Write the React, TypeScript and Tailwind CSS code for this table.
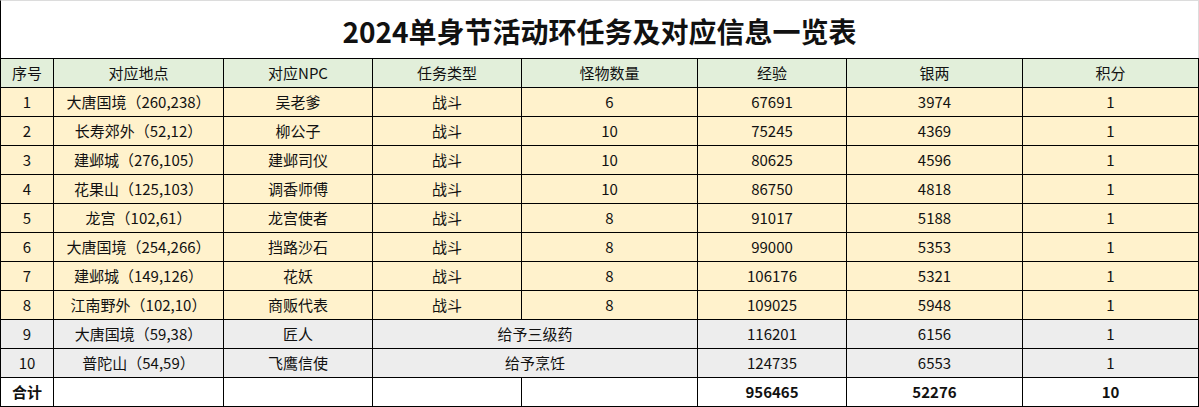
import React from "react";

type Row = {
  no: string;
  loc: string;
  npc: string;
  type: string;
  count?: string;
  exp: string;
  silver: string;
  pts: string;
  merged?: boolean;
};

const rows: Row[] = [
  { no: "1", loc: "大唐国境（260,238）", npc: "吴老爹", type: "战斗", count: "6", exp: "67691", silver: "3974", pts: "1" },
  { no: "2", loc: "长寿郊外（52,12）", npc: "柳公子", type: "战斗", count: "10", exp: "75245", silver: "4369", pts: "1" },
  { no: "3", loc: "建邺城（276,105）", npc: "建邺司仪", type: "战斗", count: "10", exp: "80625", silver: "4596", pts: "1" },
  { no: "4", loc: "花果山（125,103）", npc: "调香师傅", type: "战斗", count: "10", exp: "86750", silver: "4818", pts: "1" },
  { no: "5", loc: "龙宫（102,61）", npc: "龙宫使者", type: "战斗", count: "8", exp: "91017", silver: "5188", pts: "1" },
  { no: "6", loc: "大唐国境（254,266）", npc: "挡路沙石", type: "战斗", count: "8", exp: "99000", silver: "5353", pts: "1" },
  { no: "7", loc: "建邺城（149,126）", npc: "花妖", type: "战斗", count: "8", exp: "106176", silver: "5321", pts: "1" },
  { no: "8", loc: "江南野外（102,10）", npc: "商贩代表", type: "战斗", count: "8", exp: "109025", silver: "5948", pts: "1" },
  { no: "9", loc: "大唐国境（59,38）", npc: "匠人", type: "给予三级药", exp: "116201", silver: "6156", pts: "1", merged: true },
  { no: "10", loc: "普陀山（54,59）", npc: "飞鹰信使", type: "给予烹饪", exp: "124735", silver: "6553", pts: "1", merged: true },
];

const headers = ["序号", "对应地点", "对应NPC", "任务类型", "怪物数量", "经验", "银两", "积分"];

function Cell({ children, bg, span, bold }: { children?: React.ReactNode; bg: string; span?: boolean; bold?: boolean }) {
  return (
    <div
      className={`${bg} ${span ? "col-span-2" : ""} ${bold ? "font-bold" : ""} flex items-center justify-center whitespace-nowrap pt-px text-[15px] text-[#111]`}
    >
      {children}
    </div>
  );
}

export default function App() {
  return (
    <div className="w-[1199px] bg-white" style={{ fontFamily: '"Noto Sans CJK SC", "Noto Sans", sans-serif' }}>
      <div className="flex h-[58px] items-center justify-center border-l border-t border-r border-l-black border-t-[#dcdcdc] border-r-[#dcdcdc] pt-[2px]">
        <h1 className="text-[28px] font-bold leading-none text-[#111]">2024单身节活动环任务及对应信息一览表</h1>
      </div>
      <div className="grid auto-rows-[28px] grid-cols-[52px_169px_148px_148px_175px_148px_175px_175px] gap-px bg-black p-px">
        {headers.map((h) => (
          <Cell key={h} bg="bg-[#e2efda]">
            {h}
          </Cell>
        ))}
        {rows.map((r) => {
          const bg = r.merged ? "bg-[#ededed]" : "bg-[#fff2cc]";
          return (
            <React.Fragment key={r.no}>
              <Cell bg={bg}>{r.no}</Cell>
              <Cell bg={bg}>{r.loc}</Cell>
              <Cell bg={bg}>{r.npc}</Cell>
              {r.merged ? (
                <Cell bg={bg} span>
                  {r.type}
                </Cell>
              ) : (
                <>
                  <Cell bg={bg}>{r.type}</Cell>
                  <Cell bg={bg}>{r.count}</Cell>
                </>
              )}
              <Cell bg={bg}>{r.exp}</Cell>
              <Cell bg={bg}>{r.silver}</Cell>
              <Cell bg={bg}>{r.pts}</Cell>
            </React.Fragment>
          );
        })}
        <Cell bg="bg-white" bold>
          合计
        </Cell>
        <Cell bg="bg-white" />
        <Cell bg="bg-white" />
        <Cell bg="bg-white" />
        <Cell bg="bg-white" />
        <Cell bg="bg-white" bold>
          956465
        </Cell>
        <Cell bg="bg-white" bold>
          52276
        </Cell>
        <Cell bg="bg-white" bold>
          10
        </Cell>
      </div>
    </div>
  );
}
